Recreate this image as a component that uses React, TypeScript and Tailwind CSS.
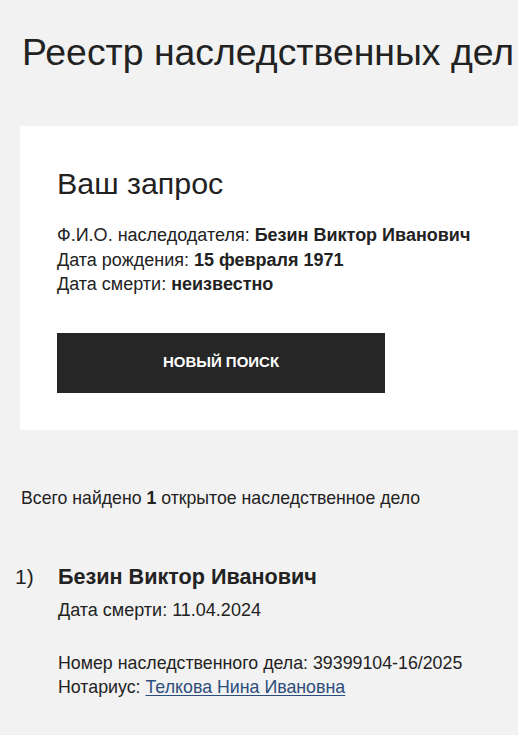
import React from "react";

const App = () => {
  return (
    <div
      className="min-h-[735px] w-[518px] overflow-hidden bg-[#f2f2f2] text-[#222222]"
      style={{ fontFamily: '"Liberation Sans", Arial, sans-serif' }}
    >
      {/* Page title */}
      <h1 className="whitespace-nowrap pl-[22px] pt-[30px] text-[37.4px] leading-[44px] font-normal">
        Реестр наследственных дел
      </h1>

      {/* Query card */}
      <div className="ml-[20px] mt-[52px] w-[520px] bg-white pb-[37px] pl-[37px] pt-[40px]">
        <h2 className="text-[30.4px] leading-[34px] font-normal">Ваш запрос</h2>
        <div className="mt-[23px] text-[18px] leading-[24.5px]">
          <div>
            Ф.И.О. наследодателя: <b>Безин Виктор Иванович</b>
          </div>
          <div>
            Дата рождения: <b>15 февраля 1971</b>
          </div>
          <div>
            Дата смерти: <b>неизвестно</b>
          </div>
        </div>
        <button
          type="button"
          className="mt-[36px] flex h-[60px] w-[328px] items-center justify-center bg-[#262626] text-[15px] font-bold uppercase text-white"
        >
          Новый поиск
        </button>
      </div>

      {/* Results */}
      <p className="mt-[58px] pl-[21px] text-[17.7px] leading-[20px]">
        Всего найдено <b>1</b> открытое наследственное дело
      </p>

      <div className="mt-[56px] flex">
        <div className="w-[58px] shrink-0 pl-[15px] text-[21px] leading-[26px]">1)</div>
        <div>
          <div className="text-[21.6px] leading-[26px] font-bold">Безин Виктор Иванович</div>
          <div className="mt-[8px] text-[18px] leading-[24px]">Дата смерти: 11.04.2024</div>
          <div className="mt-[29px] text-[17.8px] leading-[24px]">
            Номер наследственного дела: 39399104-16/2025
          </div>
          <div className="text-[17.8px] leading-[24px]">
            Нотариус:{" "}
            <a href="#" className="text-[#2d4d7c] underline underline-offset-2">
              Телкова Нина Ивановна
            </a>
          </div>
        </div>
      </div>
    </div>
  );
};

export default App;
